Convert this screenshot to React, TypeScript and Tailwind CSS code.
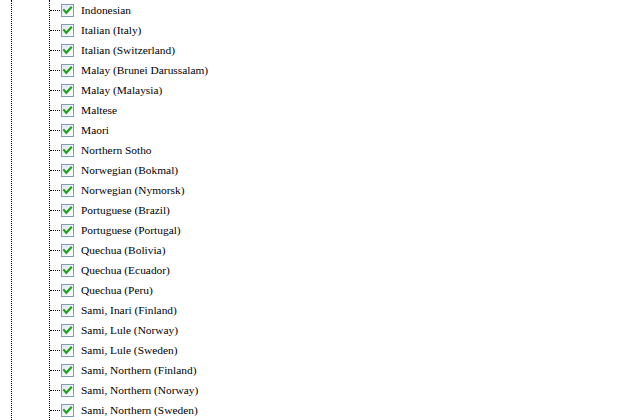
const languages = [
  "Indonesian",
  "Italian (Italy)",
  "Italian (Switzerland)",
  "Malay (Brunei Darussalam)",
  "Malay (Malaysia)",
  "Maltese",
  "Maori",
  "Northern Sotho",
  "Norwegian (Bokmal)",
  "Norwegian (Nymorsk)",
  "Portuguese (Brazil)",
  "Portuguese (Portugal)",
  "Quechua (Bolivia)",
  "Quechua (Ecuador)",
  "Quechua (Peru)",
  "Sami, Inari (Finland)",
  "Sami, Lule (Norway)",
  "Sami, Lule (Sweden)",
  "Sami, Northern (Finland)",
  "Sami, Northern (Norway)",
  "Sami, Northern (Sweden)",
];

function CheckIcon() {
  return (
    <svg width="13" height="13" viewBox="0 0 13 13" className="shrink-0">
      <defs>
        <linearGradient id="cbfill" x1="0" y1="0" x2="1" y2="1">
          <stop offset="0" stopColor="#dce6f2" />
          <stop offset="1" stopColor="#ffffff" />
        </linearGradient>
      </defs>
      <rect x="0.5" y="0.5" width="12" height="12" fill="url(#cbfill)" stroke="#7f9db9" />
      <path d="M3 6.2 L5.3 8.8 L10 3.6" fill="none" stroke="#21a121" strokeWidth="2.2" strokeLinecap="square" />
    </svg>
  );
}

export default function App() {
  return (
    <div className="h-[420px] w-[622px] overflow-hidden bg-white text-[11.4px] text-black" style={{ fontFamily: '"Liberation Serif", serif' }}>
      <div className="ml-[11px] h-full border-l border-dotted border-black">
        <div className="ml-[37px] h-full border-l border-dotted border-black">
          {languages.map((lang) => (
            <div key={lang} className="flex h-5 items-center">
              <div className="mr-[1px] w-[10px] border-t border-dotted border-black" />
              <CheckIcon />
              <span className="ml-[7px] mt-[2px] leading-none">{lang}</span>
            </div>
          ))}
        </div>
      </div>
    </div>
  );
}
